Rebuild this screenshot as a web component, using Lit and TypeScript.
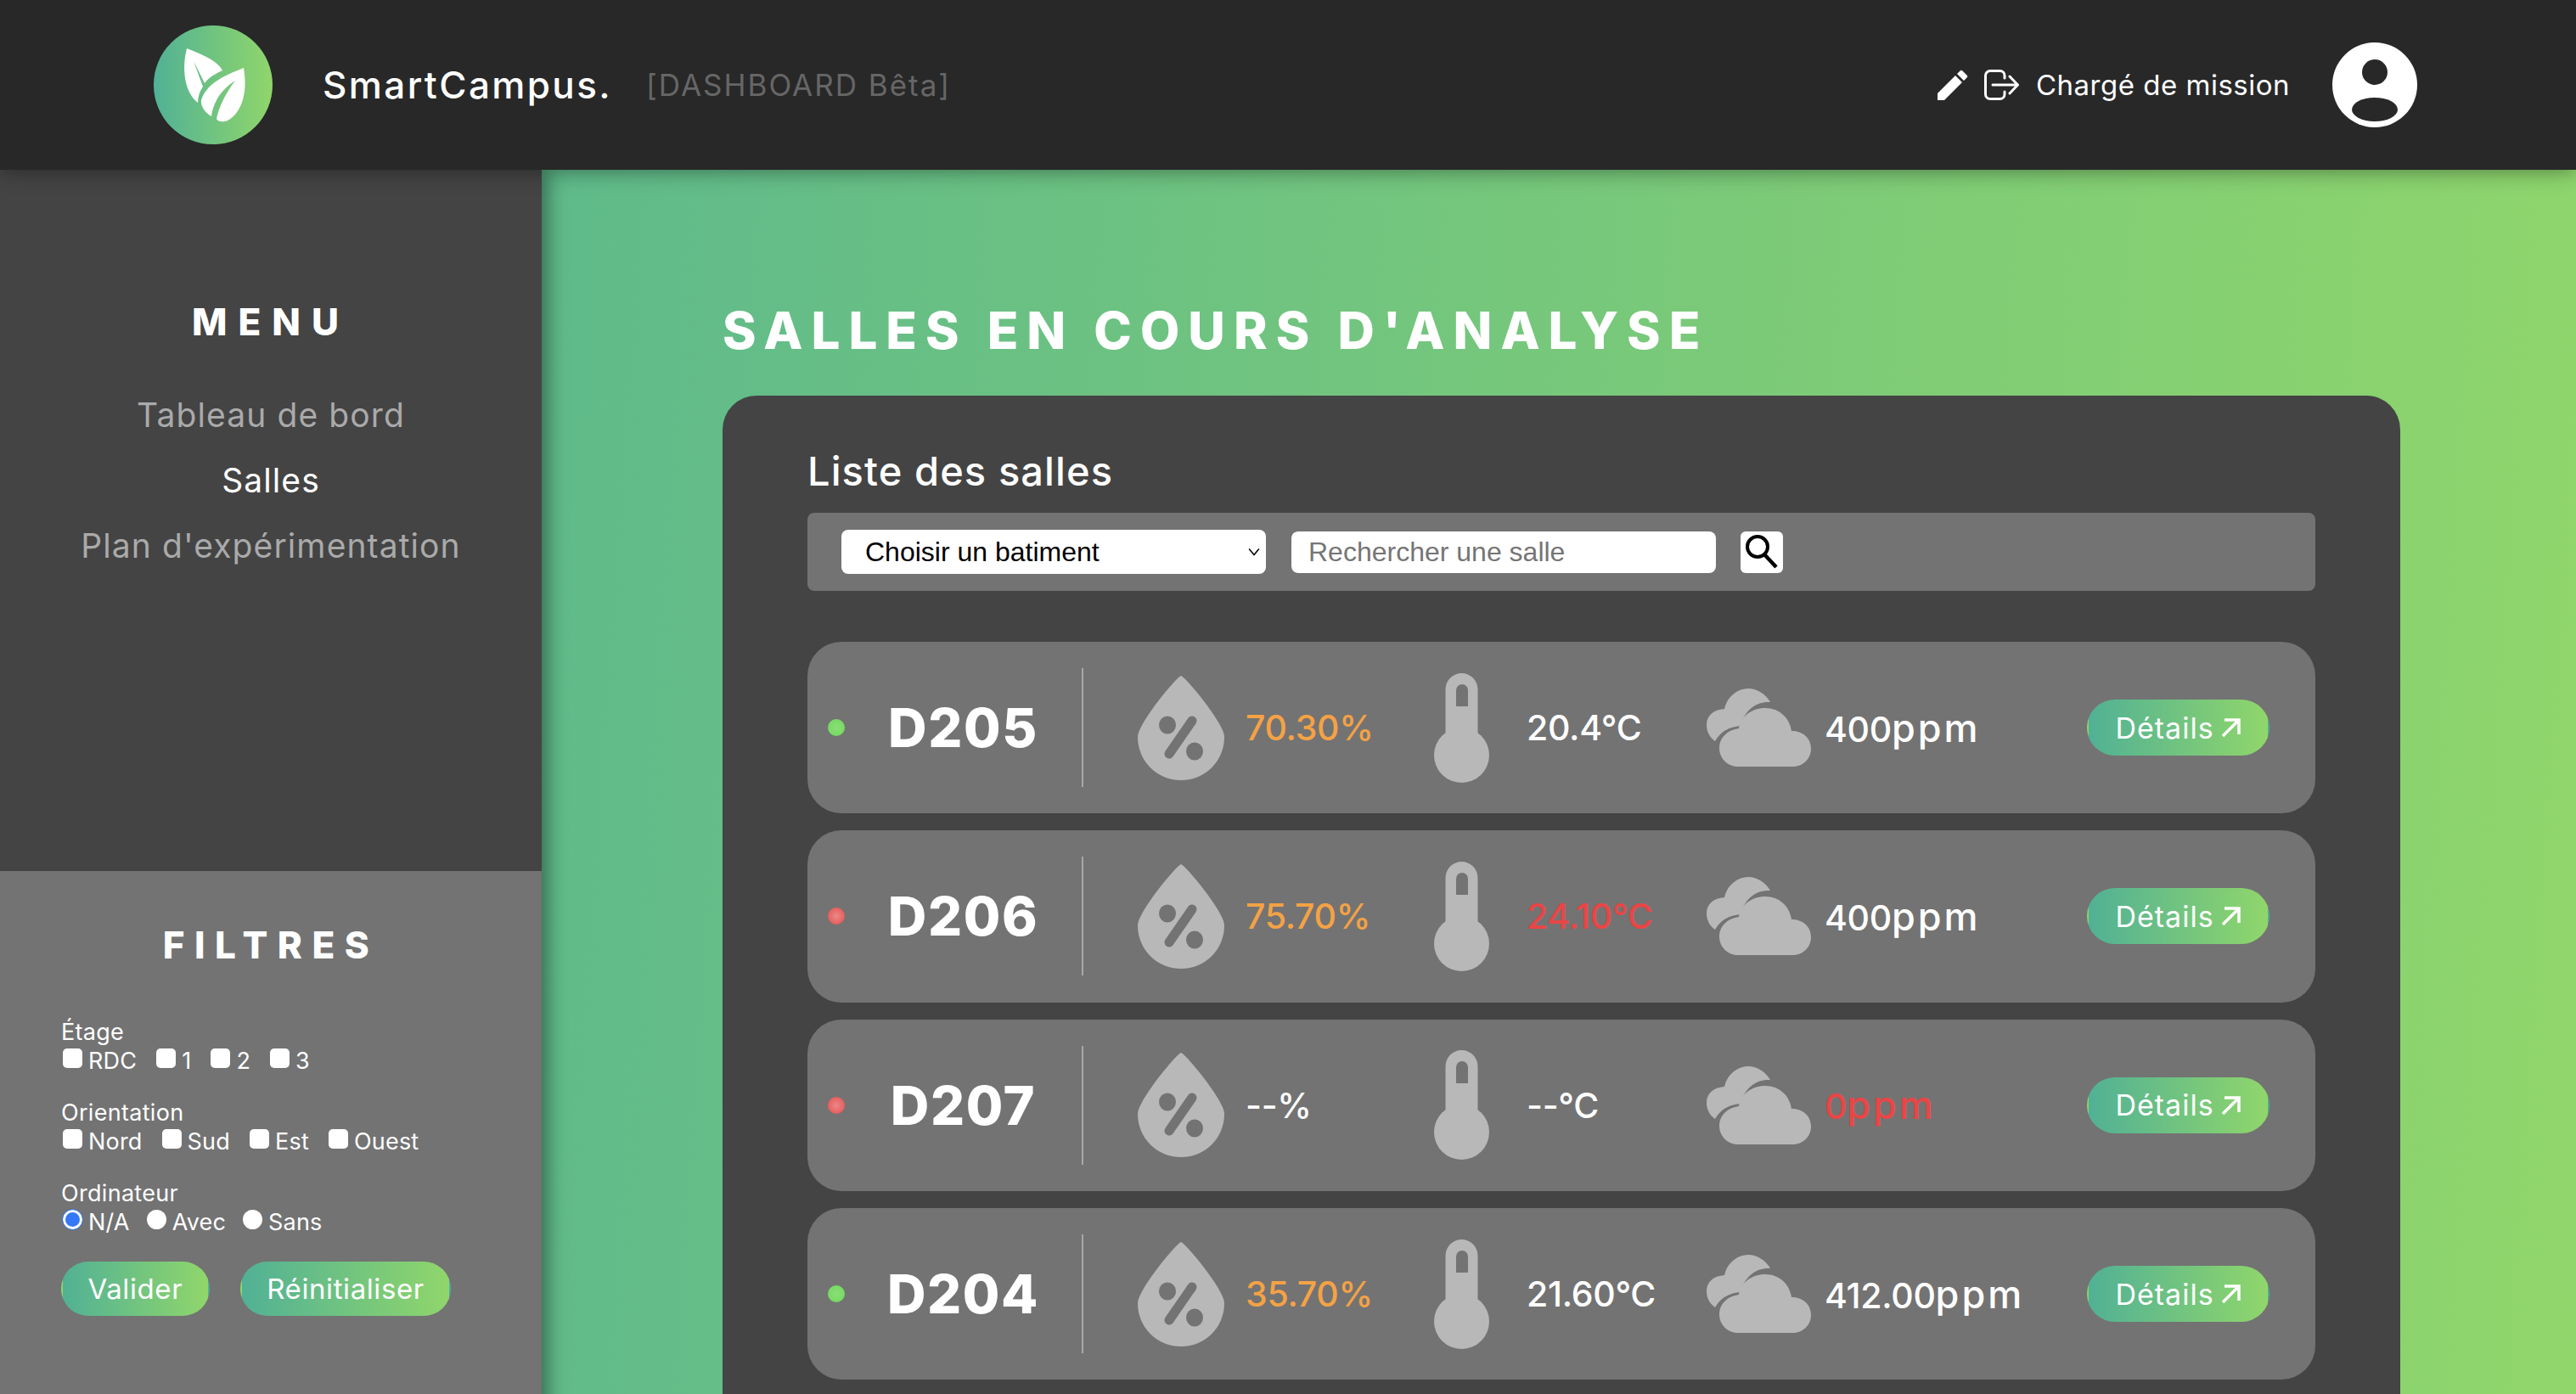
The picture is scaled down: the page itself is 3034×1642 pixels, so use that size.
import { LitElement, html, css } from "lit";
import { customElement } from "lit/decorators.js";

const ROOMS = [
  { name: "D205", ok: true, hum: "70.30%", humC: "warn", temp: "20.4°C", tempC: "", co2: "400", co2C: "" },
  { name: "D206", ok: false, hum: "75.70%", humC: "warn", temp: "24.10°C", tempC: "bad", co2: "400", co2C: "" },
  { name: "D207", ok: false, hum: "--%", humC: "", temp: "--°C", tempC: "", co2: "0", co2C: "bad" },
  { name: "D204", ok: true, hum: "35.70%", humC: "warn", temp: "21.60°C", tempC: "", co2: "412.00", co2C: "" },
];

const dropIcon = html`<svg class="ic-drop" viewBox="0 0 102 123"><path fill="#b8b8b8" d="M51 0C47 0 0 56 0 72C0 100 22 123 51 123C80 123 102 100 102 72C102 56 55 0 51 0Z"/><ellipse cx="35" cy="58" rx="10" ry="10.5" fill="#737373"/><ellipse cx="67" cy="89" rx="10" ry="10.5" fill="#737373"/><path d="M64 53L37 92" stroke="#737373" stroke-width="11" stroke-linecap="round"/></svg>`;
const thermoIcon = html`<svg class="ic-thermo" viewBox="0 0 65 129"><path fill="#b8b8b8" d="M13.5 19a19 19 0 0 1 38 0V75H13.5Z"/><circle cx="32.5" cy="96.5" r="32.5" fill="#b8b8b8"/><path fill="#737373" d="M26 39V20a7 7 0 0 1 14 0V39Z"/></svg>`;
const cloudIcon = html`<svg class="ic-cloud" viewBox="0 0 124 92"><path fill="#b8b8b8" d="M38 92C24 92 15 82 15 70C15 58 24 49 38 47C40 33 53 23 69 23C86 23 98 35 100 50C113 50 123 58 123 71C123 83 113 92 102 92Z"/><path fill="#b8b8b8" d="M10 62C3 57 0 50 0 43C0 32 8 25 21 24C24 10 36 0 49 0C60 0 70 7 75 16C59 15 45 25 40 44C27 45 16 51 10 62Z"/></svg>`;

@customElement("app-root")
export class AppRoot extends LitElement {
  static styles = css`
    :host { display: grid; grid-template-columns: 638px 1fr; grid-template-rows: 200px 1fr; height: 100vh; overflow: hidden; font-family: Inter, "Noto Sans", sans-serif; color: #fff; background: linear-gradient(94deg, #52b393, #90d66b); }
    header { grid-column: 1 / 3; background: #282828; display: flex; align-items: center; padding: 0 187px 0 181px; position: relative; z-index: 2; box-shadow: 0 0 24px rgba(0,0,0,.45); }
    .logo { width: 140px; height: 140px; flex: none; }
    .brand { font-size: 44px; font-weight: 500; margin-left: 59px; letter-spacing: 2.400px; }
    .beta { font-size: 35px; color: #666; margin-left: 40px; letter-spacing: 2px; }
    .spacer { flex: 1; }
    .pen { width: 36px; height: 36px; }
    .out { width: 41px; height: 36px; margin-left: 19px; }
    .role { font-size: 33px; margin-left: 20px; letter-spacing: .5px; }
    .user { width: 100px; height: 100px; margin-left: 50px; }
    aside { display: flex; flex-direction: column; background: #444; position: relative; z-index: 1; box-shadow: 6px 0 22px rgba(0,0,0,.45); }
    .menu { height: 826px; padding-top: 152px; box-sizing: border-box; text-align: center; }
    .menu h2, .filters h2 { margin: 0; font-size: 44px; font-weight: 800; line-height: 54px; }
    .menu h2 { letter-spacing: 13px; }
    nav { display: flex; flex-direction: column; margin-top: 59px; gap: 29px; }
    nav a { font-size: 39px; line-height: 48px; color: #aaa; letter-spacing: 1.100px; }
    nav a.on { color: #fff; }
    .filters { flex: 1; background: #737373; border-bottom-left-radius: 10px; padding: 60px 72px 0; }
    .filters h2 { text-align: center; letter-spacing: 11.500px; margin-bottom: 61px; }
    .grp { margin-bottom: 32px; font-size: 27px; }
    .grp .lbl { line-height: 30px; letter-spacing: .3px; display: block; }
    .opts { display: flex; gap: 21px; height: 30px; align-items: center; margin-top: 3px; letter-spacing: .2px; }
    .opts.radios { gap: 18px; }
    .opts label { display: flex; align-items: center; gap: 7px; }
    .opts input { appearance: none; margin: 0 0 5px 2px; width: 23px; height: 23px; background: #fff; border-radius: 5px; flex: none; }
    .opts input[type=radio] { border-radius: 50%; }
    .opts input[type=radio]:checked { background: #3478f6; border: 3px solid #fff; box-sizing: border-box; outline: 1px solid #3478f6; }
    .btns { display: flex; gap: 36px; margin-top: 25px; }
    .grad { background: linear-gradient(90deg, #51b195, #90d66b); border: 2px solid transparent; background-origin: padding-box; color: #fff; font-family: inherit; border-radius: 34px; }
    .btns button { height: 64px; font-size: 33px; padding: 0 29.500px; letter-spacing: .6px; }
    main { padding: 154px 207px 0 213px; min-width: 0; }
    h1 { margin: 0; font-size: 60px; line-height: 70px; font-weight: 800; letter-spacing: 10px; white-space: nowrap; }
    .card { margin-top: 42px; background: #444; border-radius: 40px; padding: 0 100px 0 100px; height: 1400px; }
    .card h3 { margin: 0; padding-top: 57px; font-size: 47px; line-height: 64px; font-weight: 500; height: 81px; letter-spacing: 1.100px; }
    .bar { background: #737373; border-radius: 8px; height: 92px; display: flex; align-items: center; padding-left: 40px; }
    .sel { position: relative; width: 500px; height: 52px; }
    select { appearance: none; width: 100%; height: 100%; border: 0; border-radius: 8px; background: #fff; font: 32px "Liberation Sans", sans-serif; padding-left: 28px; color: #000; }
    .chev { position: absolute; right: 7px; top: 19px; width: 14px; height: 14px; pointer-events: none; }
    input.q { width: 500px; height: 49px; margin-left: 30px; box-sizing: border-box; border: 0; border-radius: 8px; background: #fff; font: 32px "Liberation Sans", sans-serif; padding: 0 20px; }
    input.q::placeholder { color: #757575; }
    .go { width: 50px; height: 49px; margin-left: 29px; background: #fff; border-radius: 6px; display: flex; align-items: center; justify-content: center; }
    .go svg { width: 44px; height: 44px; }
    .rows { display: flex; flex-direction: column; gap: 20px; margin-top: 60px; }
    .row { height: 202.300px; flex: none; border-radius: 40px; background: #737373; display: flex; align-items: center; padding-left: 24px; }
    .dot { width: 20px; height: 20px; border-radius: 50%; flex: none; background: radial-gradient(circle, #8ade7a, #6fd957); }
    .dot.off { background: radial-gradient(circle, #e88a8a, #ea4a4a); }
    .name { width: 279px; text-align: center; font-size: 63px; font-weight: 800; letter-spacing: 1.600px; flex: none; }
    .div { width: 2px; height: 140px; background: #a8a8a8; flex: none; }
    .m { display: flex; align-items: center; flex: none; font-size: 41px; letter-spacing: -.3px; font-weight: 500; }
    .m1 { width: 349px; margin-left: 64px; gap: 25px; }
    .m2 { width: 321px; gap: 44px; }
    .m3 { width: 448px; gap: 15px; }
    .unit { font-size: 45px; letter-spacing: 3px; }
    .ic-drop { width: 102px; height: 123px; flex: none; }
    .ic-thermo { width: 65px; height: 129px; flex: none; }
    .ic-cloud { width: 124px; height: 92px; flex: none; }
    .warn { color: #f4a245; }
    .bad { color: #ea4545; }
    .det { width: 215px; height: 66px; font-size: 34px; letter-spacing: 1px; display: flex; align-items: center; justify-content: center; gap: 8px; padding: 0; box-sizing: border-box; flex: none; }
    .det svg { width: 24px; height: 24px; }
  `;

  private check(label: string, type = "checkbox", checked = false, group = "") {
    return html`<label><input type=${type} name=${group} ?checked=${checked} />${label}</label>`;
  }

  render() {
    return html`
      <header>
        <svg class="logo" viewBox="0 0 140 140">
          <defs><linearGradient id="lg"><stop offset="0" stop-color="#51b195"/><stop offset="1" stop-color="#90d66b"/></linearGradient></defs>
          <circle cx="70" cy="70" r="70" fill="url(#lg)"/>
          <path fill="#fff" d="M39 27C60 35 75 42 81 53C70 58 64 62 60 68L47 42L58 72C54 78 52 84 52 91C38 80 32 55 39 27Z"/>
          <path fill="#fff" d="M106 50C85 58 62 68 56 88C55 96 62 104 68 107C70 90 80 75 96 65C86 78 77 95 74 110C76 114 83 114 87 112C100 105 112 85 106 50Z"/>
        </svg>
        <span class="brand">SmartCampus.</span>
        <span class="beta">[DASHBOARD Bêta]</span>
        <span class="spacer"></span>
        <svg class="pen" viewBox="0 0 36 36"><path fill="#fff" d="M0 36V28L21 7L29 15L8 36Z"/><path fill="#fff" d="M23 5L26.5 1.500a2 2 0 0 1 3 0L34.500 6.500a2 2 0 0 1 0 3L31 13Z"/></svg>
        <svg class="out" viewBox="0 0 41 36" fill="none" stroke="#fff" stroke-width="3" stroke-linecap="round" stroke-linejoin="round"><path d="M24 10V7a5.500 5.500 0 0 0-5.500-5.500H7A5.500 5.500 0 0 0 1.500 7V29A5.500 5.500 0 0 0 7 34.500H18.500A5.500 5.500 0 0 0 24 29V26"/><path d="M10 18H39M30 8L39.500 18L30 28"/></svg>
        <span class="role">Chargé de mission</span>
        <svg class="user" viewBox="0 0 100 100"><circle cx="50" cy="50" r="50" fill="#fff"/><circle cx="50" cy="35" r="15" fill="#282828"/><ellipse cx="50" cy="79" rx="27" ry="14" fill="#282828"/></svg>
      </header>
      <aside>
        <div class="menu">
          <h2>MENU</h2>
          <nav><a>Tableau de bord</a><a class="on">Salles</a><a>Plan d'expérimentation</a></nav>
        </div>
        <div class="filters">
          <h2>FILTRES</h2>
          <div class="grp"><span class="lbl">Étage</span><div class="opts">${["RDC", "1", "2", "3"].map((x) => this.check(x))}</div></div>
          <div class="grp"><span class="lbl">Orientation</span><div class="opts">${["Nord", "Sud", "Est", "Ouest"].map((x) => this.check(x))}</div></div>
          <div class="grp"><span class="lbl">Ordinateur</span><div class="opts radios">${["N/A", "Avec", "Sans"].map((x, i) => this.check(x, "radio", i === 0, "pc"))}</div></div>
          <div class="btns"><button class="grad">Valider</button><button class="grad">Réinitialiser</button></div>
        </div>
      </aside>
      <main>
        <h1>SALLES EN COURS D'ANALYSE</h1>
        <section class="card">
          <h3>Liste des salles</h3>
          <div class="bar">
            <div class="sel">
              <select><option>Choisir un batiment</option></select>
              <svg class="chev" viewBox="0 0 12 12" fill="none" stroke="#000" stroke-width="1.300"><path d="M1 3L6 9L11 3"/></svg>
            </div>
            <input class="q" placeholder="Rechercher une salle" />
            <div class="go"><svg viewBox="0 0 44 44" fill="none" stroke="#000"><circle cx="17" cy="16" r="12" stroke-width="4"/><path d="M25 25L39 40" stroke-width="4.500"/></svg></div>
          </div>
          <div class="rows">
            ${ROOMS.map((r) => html`
              <div class="row">
                <span class="dot ${r.ok ? "" : "off"}"></span>
                <span class="name">${r.name}</span>
                <span class="div"></span>
                <div class="m m1">${dropIcon}<span class=${r.humC}>${r.hum}</span></div>
                <div class="m m2">${thermoIcon}<span class=${r.tempC}>${r.temp}</span></div>
                <div class="m m3">${cloudIcon}<span class=${r.co2C}>${r.co2}<span class="unit">ppm</span></span></div>
                <button class="grad det">Détails <svg viewBox="0 0 24 24" fill="none" stroke="#fff" stroke-width="3.500"><path d="M2 22L20 4M4 3H21V20"/></svg></button>
              </div>`)}
          </div>
        </section>
      </main>
    `;
  }
}
